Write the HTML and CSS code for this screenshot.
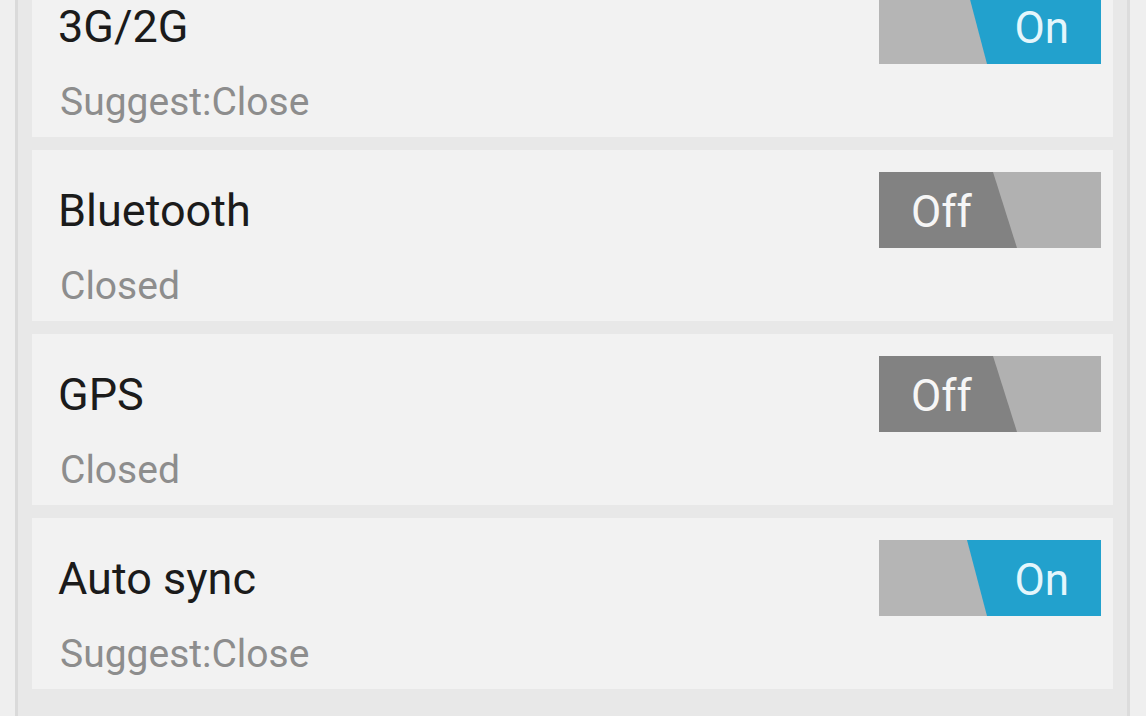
FILE: index.html
```html
<!DOCTYPE html>
<html lang="en">
<head>
    <meta charset="UTF-8">
    <meta name="viewport" content="width=device-width, initial-scale=1.0">
    <title>Power saving switches</title>
    <link rel="stylesheet" href="styles.css">
</head>
<body>
    <div class="frame">
        <!-- Switch list -->
        <ul class="switch-list">
            <li class="switch-item">
                <div class="switch-text">
                    <p class="switch-title">3G/2G</p>
                    <p class="switch-state">Suggest:Close</p>
                </div>
                <div class="toggle toggle-on">
                    <span class="toggle-fill"></span>
                    <span class="toggle-label">On</span>
                </div>
            </li>
            <li class="switch-item">
                <div class="switch-text">
                    <p class="switch-title">Bluetooth</p>
                    <p class="switch-state">Closed</p>
                </div>
                <div class="toggle toggle-off">
                    <span class="toggle-fill"></span>
                    <span class="toggle-label">Off</span>
                </div>
            </li>
            <li class="switch-item">
                <div class="switch-text">
                    <p class="switch-title">GPS</p>
                    <p class="switch-state">Closed</p>
                </div>
                <div class="toggle toggle-off">
                    <span class="toggle-fill"></span>
                    <span class="toggle-label">Off</span>
                </div>
            </li>
            <li class="switch-item">
                <div class="switch-text">
                    <p class="switch-title">Auto sync</p>
                    <p class="switch-state">Suggest:Close</p>
                </div>
                <div class="toggle toggle-on">
                    <span class="toggle-fill"></span>
                    <span class="toggle-label">On</span>
                </div>
            </li>
        </ul>
    </div>
</body>
</html>
```

FILE: styles.css
```css
html, body {
    height: 100%;
}
body {
    margin: 0;
    font-family: Roboto, "Noto Sans", Arial, sans-serif;
    background-color: #efefef;
    overflow: hidden;
}
.frame {
    height: 100%;
    margin: 0 16px 0 15px;
    border-left: 3px solid #dadada;
    border-right: 3px solid #dcdcdc;
    background-color: #e8e8e8;
    padding: 0 14px;
    overflow: hidden;
}
.switch-list {
    list-style: none;
    margin: -34px 0 0 0;
    padding: 0;
    display: flex;
    flex-direction: column;
    gap: 13px;
}
.switch-item {
    display: flex;
    align-items: flex-start;
    justify-content: space-between;
    height: 171px;
    flex-shrink: 0;
    box-sizing: border-box;
    padding: 0 12px 0 26px;
    background-color: #f2f2f2;
}
.switch-text {
    padding-top: 35px;
}
.switch-title {
    margin: 0;
    font-size: 45px;
    line-height: 52px;
    color: #1b1b1b;
}
.switch-state {
    margin: 26px 0 0 2px;
    font-size: 39px;
    line-height: 46px;
    color: #8d8d8d;
}
.toggle {
    position: relative;
    display: flex;
    align-items: center;
    width: 222px;
    height: 76px;
    margin-top: 22px;
    box-sizing: border-box;
    padding-top: 3px;
}
.toggle-fill {
    position: absolute;
    top: 0;
    bottom: 0;
}
.toggle-label {
    position: relative;
    font-size: 44px;
    line-height: 52px;
}
.toggle-on {
    background-color: #b5b5b5;
    justify-content: flex-end;
    padding-right: 32px;
}
.toggle-on .toggle-fill {
    left: 0;
    right: 0;
    background-color: #22a1cd;
    clip-path: polygon(88px 0, 100% 0, 100% 100%, 108px 100%);
}
.toggle-on .toggle-label {
    color: #e4f6fc;
}
.toggle-off {
    background-color: #b1b1b1;
    padding-left: 32px;
}
.toggle-off .toggle-fill {
    left: 0;
    right: 0;
    background-color: #828282;
    clip-path: polygon(0 0, 114px 0, 138px 100%, 0 100%);
}
.toggle-off .toggle-label {
    color: #f6f6f6;
}
```
